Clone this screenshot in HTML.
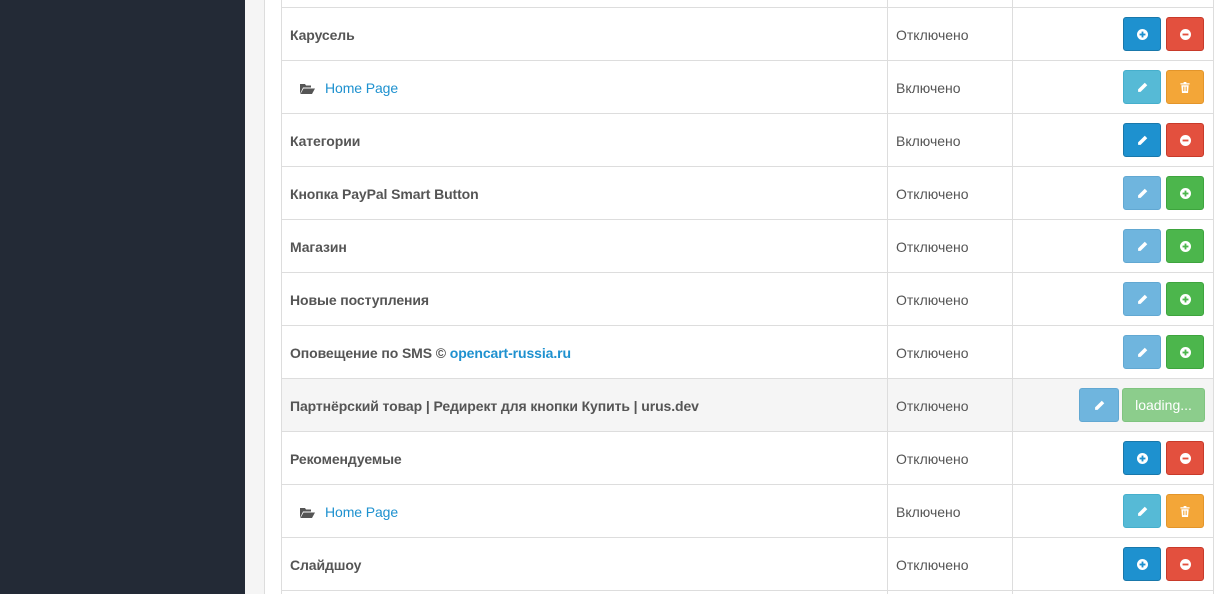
<!DOCTYPE html>
<html style="width:1225px;height:594px;overflow:hidden"><head><meta charset="utf-8"><style>
*{margin:0;padding:0;box-sizing:border-box}
body{width:1225px;height:594px;overflow:hidden;background:#fff;font-family:"Liberation Sans","Open Sans",sans-serif;font-size:14px;color:#555;position:relative}
.sb{position:absolute;left:0;top:0;width:245px;height:594px;background:#232a36}
.gr{position:absolute;left:245px;top:0;width:20px;height:594px;background:#f5f5f5;border-right:1px solid #ddd}
.tb{position:absolute;left:281px;top:0;width:933px;height:594px;border-left:1px solid #ddd;border-right:1px solid #ddd}
.row{position:absolute;left:282px;width:931px;height:53px;border-top:1px solid #ddd}
.row.hl{background:#f5f5f5}
.c1{position:absolute;left:8px;top:1px;line-height:52px;font-weight:bold;white-space:nowrap;letter-spacing:-0.1px}
.c1.n{font-weight:normal}
.c1 a{color:#1e91cf;text-decoration:none}
.c2{position:absolute;left:605px;top:0;height:52px;border-left:1px solid #ddd;border-right:1px solid #ddd;width:126px;line-height:54px;padding-left:8px}
.btn{position:absolute;top:9px;height:34px;width:38px;border-radius:3px;display:flex;align-items:center;justify-content:center;color:#fff}
.b1{left:841px}.b2{left:884px}
.pr{background:#1e91cf;border:1px solid #1978ab}
.dg{background:#e3503e;border:1px solid #c83a2a}
.in{background:#56bad6;border:1px solid #46afcc}
.wa{background:#f3a638;border:1px solid #e3952a}
.pl{background:#6fb5de;border:1px solid #62a8d2}
.su{background:#4cb64c;border:1px solid #3ea43e}
.ld{background:#8ccd8c;border:1px solid #80c480;width:83px;left:840px;font-size:14px}
.fold{display:inline-block;vertical-align:middle;margin:0 10px 0 10px}
</style></head><body>
<div class="sb"></div><div class="gr"></div><div class="tb"></div>

<div class="row" style="top:7px"><div class="c1">Карусель</div><div class="c2">Отключено</div>
<div class="btn pr b1"><svg width="11" height="11" viewBox="0 0 12 12"><circle cx="6" cy="6" r="6" fill="#fff"/><rect x="5" y="2.8" width="2" height="6.4" fill="#1e91cf"/><rect x="2.8" y="5" width="6.4" height="2" fill="#1e91cf"/></svg></div>
<div class="btn dg b2"><svg width="11" height="11" viewBox="0 0 12 12"><circle cx="6" cy="6" r="6" fill="#fff"/><rect x="2.8" y="5" width="6.4" height="2" fill="#e3503e"/></svg></div></div>

<div class="row" style="top:60px"><div class="c1 n"><svg class="fold" width="15" height="12" viewBox="0 0 15 12"><path d="M0 1h5l1 1.5h5v2H3L0 11z" fill="#555"/><path d="M3.5 5.5H15L12 11H0.5z" fill="#555"/></svg><a>Home Page</a></div><div class="c2">Включено</div>
<div class="btn in b1"><svg width="11" height="11" viewBox="0 0 12 12"><path d="M8.5 0.8l2.7 2.7-7.3 7.3H1.2V8.1z" fill="#fff"/></svg></div>
<div class="btn wa b2"><svg width="10" height="11" viewBox="0 0 10 12"><path d="M3.5 0h3v1.3H10v1.4H0V1.3h3.5zM1 3.5h8L8.3 12H1.7z" fill="#fff"/><path d="M3.3 5v5M5 5v5M6.7 5v5" stroke="#f3a638" stroke-width=".8"/></svg></div></div>

<div class="row" style="top:113px"><div class="c1">Категории</div><div class="c2">Включено</div>
<div class="btn pr b1"><svg width="11" height="11" viewBox="0 0 12 12"><path d="M8.5 0.8l2.7 2.7-7.3 7.3H1.2V8.1z" fill="#fff"/></svg></div>
<div class="btn dg b2"><svg width="11" height="11" viewBox="0 0 12 12"><circle cx="6" cy="6" r="6" fill="#fff"/><rect x="2.8" y="5" width="6.4" height="2" fill="#e3503e"/></svg></div></div>

<div class="row" style="top:166px"><div class="c1">Кнопка PayPal Smart Button</div><div class="c2">Отключено</div>
<div class="btn pl b1"><svg width="11" height="11" viewBox="0 0 12 12"><path d="M8.5 0.8l2.7 2.7-7.3 7.3H1.2V8.1z" fill="#fff"/></svg></div>
<div class="btn su b2"><svg width="11" height="11" viewBox="0 0 12 12"><circle cx="6" cy="6" r="6" fill="#fff"/><rect x="5" y="2.8" width="2" height="6.4" fill="#4cb64c"/><rect x="2.8" y="5" width="6.4" height="2" fill="#4cb64c"/></svg></div></div>

<div class="row" style="top:219px"><div class="c1">Магазин</div><div class="c2">Отключено</div>
<div class="btn pl b1"><svg width="11" height="11" viewBox="0 0 12 12"><path d="M8.5 0.8l2.7 2.7-7.3 7.3H1.2V8.1z" fill="#fff"/></svg></div>
<div class="btn su b2"><svg width="11" height="11" viewBox="0 0 12 12"><circle cx="6" cy="6" r="6" fill="#fff"/><rect x="5" y="2.8" width="2" height="6.4" fill="#4cb64c"/><rect x="2.8" y="5" width="6.4" height="2" fill="#4cb64c"/></svg></div></div>

<div class="row" style="top:272px"><div class="c1">Новые поступления</div><div class="c2">Отключено</div>
<div class="btn pl b1"><svg width="11" height="11" viewBox="0 0 12 12"><path d="M8.5 0.8l2.7 2.7-7.3 7.3H1.2V8.1z" fill="#fff"/></svg></div>
<div class="btn su b2"><svg width="11" height="11" viewBox="0 0 12 12"><circle cx="6" cy="6" r="6" fill="#fff"/><rect x="5" y="2.8" width="2" height="6.4" fill="#4cb64c"/><rect x="2.8" y="5" width="6.4" height="2" fill="#4cb64c"/></svg></div></div>

<div class="row" style="top:325px"><div class="c1">Оповещение по SMS © <a>opencart-russia.ru</a></div><div class="c2">Отключено</div>
<div class="btn pl b1"><svg width="11" height="11" viewBox="0 0 12 12"><path d="M8.5 0.8l2.7 2.7-7.3 7.3H1.2V8.1z" fill="#fff"/></svg></div>
<div class="btn su b2"><svg width="11" height="11" viewBox="0 0 12 12"><circle cx="6" cy="6" r="6" fill="#fff"/><rect x="5" y="2.8" width="2" height="6.4" fill="#4cb64c"/><rect x="2.8" y="5" width="6.4" height="2" fill="#4cb64c"/></svg></div></div>

<div class="row hl" style="top:378px"><div class="c1">Партнёрский товар | Редирект для кнопки Купить | urus.dev</div><div class="c2">Отключено</div>
<div class="btn pl" style="left:797px;width:40px"><svg width="11" height="11" viewBox="0 0 12 12"><path d="M8.5 0.8l2.7 2.7-7.3 7.3H1.2V8.1z" fill="#fff"/></svg></div>
<div class="btn ld">loading...</div></div>

<div class="row" style="top:431px"><div class="c1">Рекомендуемые</div><div class="c2">Отключено</div>
<div class="btn pr b1"><svg width="11" height="11" viewBox="0 0 12 12"><circle cx="6" cy="6" r="6" fill="#fff"/><rect x="5" y="2.8" width="2" height="6.4" fill="#1e91cf"/><rect x="2.8" y="5" width="6.4" height="2" fill="#1e91cf"/></svg></div>
<div class="btn dg b2"><svg width="11" height="11" viewBox="0 0 12 12"><circle cx="6" cy="6" r="6" fill="#fff"/><rect x="2.8" y="5" width="6.4" height="2" fill="#e3503e"/></svg></div></div>

<div class="row" style="top:484px"><div class="c1 n"><svg class="fold" width="15" height="12" viewBox="0 0 15 12"><path d="M0 1h5l1 1.5h5v2H3L0 11z" fill="#555"/><path d="M3.5 5.5H15L12 11H0.5z" fill="#555"/></svg><a>Home Page</a></div><div class="c2">Включено</div>
<div class="btn in b1"><svg width="11" height="11" viewBox="0 0 12 12"><path d="M8.5 0.8l2.7 2.7-7.3 7.3H1.2V8.1z" fill="#fff"/></svg></div>
<div class="btn wa b2"><svg width="10" height="11" viewBox="0 0 10 12"><path d="M3.5 0h3v1.3H10v1.4H0V1.3h3.5zM1 3.5h8L8.3 12H1.7z" fill="#fff"/><path d="M3.3 5v5M5 5v5M6.7 5v5" stroke="#f3a638" stroke-width=".8"/></svg></div></div>

<div class="row" style="top:537px"><div class="c1">Слайдшоу</div><div class="c2">Отключено</div>
<div class="btn pr b1"><svg width="11" height="11" viewBox="0 0 12 12"><circle cx="6" cy="6" r="6" fill="#fff"/><rect x="5" y="2.8" width="2" height="6.4" fill="#1e91cf"/><rect x="2.8" y="5" width="6.4" height="2" fill="#1e91cf"/></svg></div>
<div class="btn dg b2"><svg width="11" height="11" viewBox="0 0 12 12"><circle cx="6" cy="6" r="6" fill="#fff"/><rect x="2.8" y="5" width="6.4" height="2" fill="#e3503e"/></svg></div></div>

<div class="row" style="top:590px;height:4px"><div class="c2" style="height:4px"></div></div>
<div class="row" style="top:-46px"><div class="c2"></div></div>
</body></html>
